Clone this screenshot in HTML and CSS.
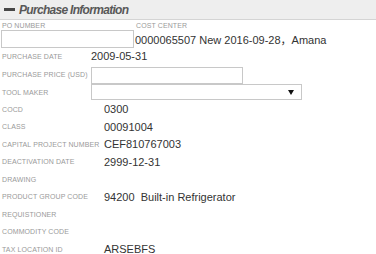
FILE: index.html
```html
<!DOCTYPE html>
<html>
<head>
	<link rel="stylesheet" href="styles.css">
</head>
<body>
	<div class="panel">
		<div class="panel-head">
			<span class="collapse"></span>
			<span class="title">Purchase Information</span>
		</div>
		<div class="top-row">
			<div class="po">
				<label>PO NUMBER</label>
				<input type="text" class="po-input" />
			</div>
			<div class="cost">
				<label>COST CENTER</label>
				<div class="value">0000065507 New 2016-09-28，Amana</div>
			</div>
		</div>
		<div class="fields">
			<div class="row row-date">
				<label>PURCHASE DATE</label>
				<div class="value">2009-05-31</div>
			</div>
			<div class="row row-price">
				<label>PURCHASE PRICE (USD)</label>
				<input type="text" class="price-input" />
			</div>
			<div class="row row-tool">
				<label>TOOL MAKER</label>
				<div class="fake-select"><span class="arrow"></span></div>
			</div>
		</div>
		<div class="fields details">
			<div class="row"><label>COCD</label><div class="value">0300</div></div>
			<div class="row"><label>CLASS</label><div class="value">00091004</div></div>
			<div class="row"><label>CAPITAL PROJECT NUMBER</label><div class="value">CEF810767003</div></div>
			<div class="row"><label>DEACTIVATION DATE</label><div class="value">2999-12-31</div></div>
			<div class="row"><label>DRAWING</label><div class="value"></div></div>
			<div class="row"><label>PRODUCT GROUP CODE</label><div class="value">94200&nbsp; Built-in Refrigerator</div></div>
			<div class="row"><label>REQUISTIONER</label><div class="value"></div></div>
			<div class="row"><label>COMMODITY CODE</label><div class="value"></div></div>
			<div class="row"><label>TAX LOCATION ID</label><div class="value">ARSEBFS</div></div>
		</div>
	</div>
</body>
</html>
```

FILE: styles.css
```css
html,body{
	margin: 0;
	padding: 0;
	background: #fff;
	font-family: "Liberation Sans", Arial, "Noto Sans CJK SC", sans-serif;
}
.panel{
	width: 376px;
}
.panel-head{
	height: 19px;
	background: #eeeeee;
	border-bottom: 1px solid #d4d4d4;
	display: flex;
	align-items: center;
	padding-left: 4px;
}
.collapse{
	width: 11px;
	height: 3px;
	background: #474747;
	margin-right: 4px;
}
.title{
	font-size: 12px;
	font-weight: bold;
	font-style: italic;
	color: #585858;
	letter-spacing: -0.7px;
}
label{
	font-size: 7px;
	color: #9a9a9a;
	text-transform: uppercase;
	white-space: nowrap;
	letter-spacing: 0.1px;
}
.value{
	font-size: 11px;
	color: #333;
	white-space: nowrap;
}
input{
	margin: 0;
	padding: 0;
	border: 1px solid #c8c8c8;
	box-sizing: border-box;
	background: #fff;
	outline: none;
}
.top-row{
	display: flex;
	padding-top: 2px;
}
.po{
	width: 135px;
	padding-left: 1px;
	box-sizing: border-box;
}
.po label, .cost label{
	display: block;
	line-height: 7px;
	margin-left: 1px;
}
.po-input{
	width: 133px;
	height: 18px;
}
.cost .value{
	margin-top: 2px;
}
.row{
	display: flex;
	align-items: center;
	height: 17px;
}
.row label{
	width: 89px;
	padding-left: 2px;
	flex-shrink: 0;
}
.row-date{
	height: 17px;
}
.row-price{
	height: 19px;
}
.row-tool{
	height: 17px;
}
.price-input{
	width: 152px;
	height: 17px;
	margin-top: 2px;
}
.fake-select{
	width: 211px;
	height: 16px;
	border: 1px solid #c8c8c8;
	box-sizing: border-box;
	display: flex;
	align-items: center;
	justify-content: flex-end;
	padding-right: 7px;
}
.arrow{
	width: 0;
	height: 0;
	border-left: 3px solid transparent;
	border-right: 3px solid transparent;
	border-top: 5px solid #111;
}
.details .row{
	height: 17.5px;
}
.details .row label{
	width: 102px;
}
```
